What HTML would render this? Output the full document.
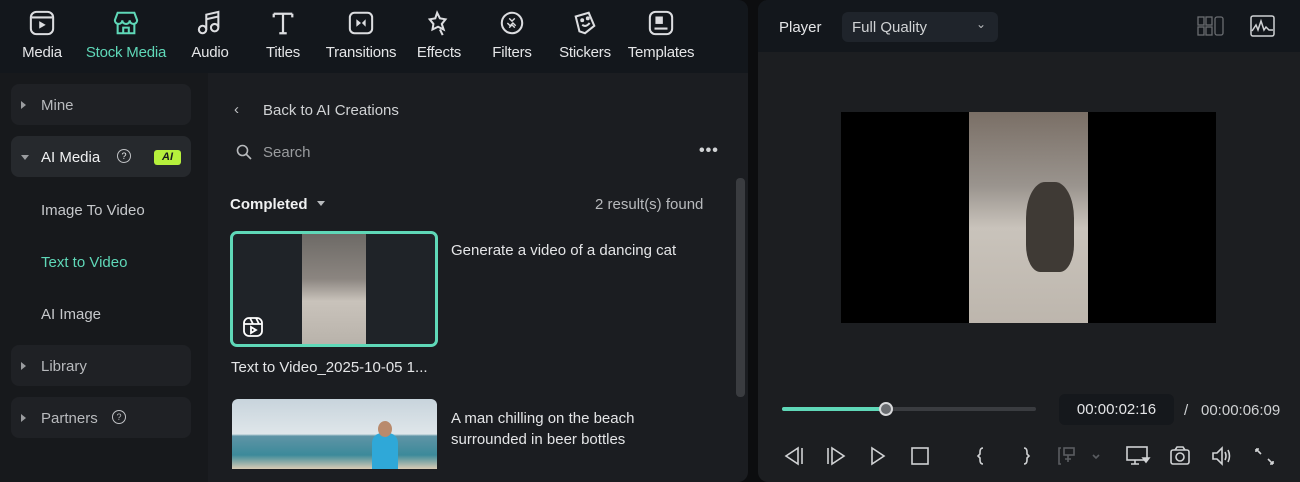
<!DOCTYPE html><html><head><style>
*{margin:0;padding:0;box-sizing:border-box}
body{width:1300px;height:482px;background:#0c0d0f;font-family:"Liberation Sans",sans-serif;color:#d8d9db;position:relative;overflow:hidden;font-size:15px}
.abs{position:absolute}
#left{left:0;top:0;width:748px;height:482px;background:#1b1d21;border-radius:0 10px 10px 0;overflow:hidden}
#tb{left:0;top:0;width:748px;height:73px;background:#13171c}
.tool{position:absolute;top:10px;text-align:center;font-size:15px;color:#e4e5e7;letter-spacing:-0.2px}
.tool svg{display:block;margin:0 auto 8px}
#side{left:0;top:73px;width:208px;height:409px;background:#17191c}
.grp{position:absolute;left:11px;width:180px;height:41px;background:#1f2125;border-radius:8px;font-size:15px;color:#b8babd}
.grp span{position:absolute;top:13px}
.tri{position:absolute;left:10px;top:17px;width:0;height:0;border-left:5px solid #9a9c9f;border-top:4px solid transparent;border-bottom:4px solid transparent}
.sub{position:absolute;left:41px;font-size:15px;color:#c6c8cb}
#right{left:758px;top:0;width:542px;height:482px;background:#1c1e21;border-radius:10px 0 0 10px;overflow:hidden}
#ph{left:0;top:0;width:542px;height:52px;background:#13171c}
</style></head><body>
<div id="left" class="abs">
<div id="tb" class="abs">
 <div class="tool" style="left:19px;width:46px"><svg width="26" height="26" viewBox="0 0 28 28" fill="none" stroke="#dcdde0" stroke-width="2.2"><rect x="2" y="2" width="24" height="24" rx="6"/><path d="M3 8h22"/><path d="M11 12v8l7-4z" fill="#dcdde0" stroke="none"/></svg>Media</div>
 <div class="tool" style="left:82px;width:88px;color:#5fd8b8"><svg width="26" height="26" viewBox="0 0 28 28" fill="none" stroke="#5fd8b8" stroke-width="2.2"><path d="M5 3h18l3 8a4 4 0 0 1-8 0 4 4 0 0 1-8 0 4 4 0 0 1-8 0z"/><path d="M5 14v11h18V14"/><path d="M11 25v-6h6v6"/></svg>Stock Media</div>
 <div class="tool" style="left:189px;width:42px"><svg width="26" height="26" viewBox="0 0 28 28" fill="none" stroke="#dcdde0" stroke-width="2.2"><path d="M10 21V5l13-3v16"/><circle cx="6" cy="21" r="4"/><circle cx="19" cy="19" r="4"/><path d="M10 10l13-3"/></svg>Audio</div>
 <div class="tool" style="left:264px;width:38px"><svg width="26" height="26" viewBox="0 0 28 28" fill="none" stroke="#dcdde0" stroke-width="2.4"><path d="M4 4h20M14 4v21M10 25h8M4 4v4M24 4v4"/></svg>Titles</div>
 <div class="tool" style="left:323px;width:76px"><svg width="26" height="26" viewBox="0 0 28 28" fill="none" stroke="#dcdde0" stroke-width="2.2"><rect x="2" y="3" width="24" height="22" rx="5"/><path d="M9 10l5 4-5 4z M19 10l-4 4 4 4z" fill="#dcdde0" stroke="none"/></svg>Transitions</div>
 <div class="tool" style="left:415px;width:48px"><svg width="26" height="26" viewBox="0 0 28 28" fill="none" stroke="#dcdde0" stroke-width="2.2"><path d="M12 3l3 6 6 1-4 5 2 6-6-3-6 3 1-6-4-5 6-1z"/><path d="M15 21l3 6"/></svg>Effects</div>
 <div class="tool" style="left:490px;width:44px"><svg width="26" height="26" viewBox="0 0 28 28" fill="none" stroke="#dcdde0" stroke-width="2.2"><circle cx="14" cy="14" r="11"/><path d="M11 9l3 3 3-3M9 14l3 3 3-3 3 3M11 19l3-3 3 3" stroke-width="1.5"/></svg>Filters</div>
 <div class="tool" style="left:556px;width:58px"><svg width="26" height="26" viewBox="0 0 28 28" fill="none" stroke="#dcdde0" stroke-width="2.2"><path d="M4 7l14-4 6 14-10 8-6-2z"/><circle cx="11" cy="11" r="1" fill="#dcdde0"/><circle cx="17" cy="9" r="1" fill="#dcdde0"/><path d="M11 16q4 3 8-2"/></svg>Stickers</div>
 <div class="tool" style="left:625px;width:72px"><svg width="26" height="26" viewBox="0 0 28 28" fill="none" stroke="#dcdde0" stroke-width="2.2"><rect x="2" y="2" width="24" height="24" rx="6"/><rect x="8" y="7" width="8" height="8" fill="#dcdde0" stroke="none"/><path d="M7 20h14"/></svg>Templates</div>
</div>
<div id="side" class="abs">
 <div class="grp" style="top:11px"><div class="tri"></div><span style="left:30px">Mine</span></div>
 <div class="grp" style="top:63px;background:#26292d;color:#f0f1f2"><div class="tri" style="border-left:4px solid transparent;border-right:4px solid transparent;border-top:5px solid #9a9c9f;border-bottom:0;top:19px"></div><span style="left:30px">AI Media</span><span style="left:106px;top:13px;width:14px;height:14px;border:1.4px solid #c0c2c5;border-radius:50%;font-size:9px;text-align:center;line-height:12px">?</span><span style="left:143px;top:14px;width:27px;height:15px;background:#b6f03c;color:#1a1c1f;border-radius:3px;font-size:11px;font-weight:bold;font-style:italic;text-align:center;line-height:15px">AI</span></div>
 <div class="sub" style="top:129px">Image To Video</div>
 <div class="sub" style="top:181px;color:#5fd8b8">Text to Video</div>
 <div class="sub" style="top:233px">AI Image</div>
 <div class="grp" style="top:272px"><div class="tri"></div><span style="left:30px">Library</span></div>
 <div class="grp" style="top:324px"><div class="tri"></div><span style="left:30px">Partners</span><span style="left:101px;top:13px;width:14px;height:14px;border:1.4px solid #c0c2c5;border-radius:50%;font-size:9px;text-align:center;line-height:12px">?</span></div>
</div>
<div class="abs" style="left:234px;top:101px;color:#c0c2c5;font-size:15px">‹</div>
<div class="abs" style="left:263px;top:102px;color:#d0d2d4">Back to AI Creations</div>
<svg class="abs" style="left:236px;top:144px" width="16" height="16" fill="none" stroke="#b8babd" stroke-width="1.6"><circle cx="6.5" cy="6.5" r="5"/><path d="M10 10l5 5"/></svg>
<div class="abs" style="left:263px;top:144px;color:#9a9c9f">Search</div>
<div class="abs" style="left:699px;top:142px;color:#d0d2d4;font-size:16px;letter-spacing:1px;font-weight:bold">•••</div>
<div class="abs" style="left:230px;top:196px;color:#f0f1f2;font-weight:bold">Completed</div>
<div class="abs" style="left:317px;top:201px;width:0;height:0;border-left:4px solid transparent;border-right:4px solid transparent;border-top:5px solid #b8babd"></div>
<div class="abs" style="left:595px;top:196px;color:#b8babd">2 result(s) found</div>
<div class="abs" style="left:736px;top:178px;width:9px;height:219px;background:#3a3c40;border-radius:4px"></div>
<div class="abs" style="left:230px;top:231px;width:208px;height:116px;border:3px solid #5fd8b8;border-radius:7px;background:#1f2328;overflow:hidden">
 <div class="abs" style="left:69px;top:0;width:64px;height:112px;background:linear-gradient(#6d6a66,#8b8580 40%,#c9c3bb 60%,#b8b2aa)"></div>
 <svg class="abs" style="left:9px;top:82px" width="22" height="22" fill="none" stroke="#fff" stroke-width="1.8"><rect x="2" y="2" width="18" height="18" rx="5"/><path d="M2 8h18M8 2l3 6M14 2l3 6"/><path d="M9 11v6l5-3z"/></svg>
</div>
<div class="abs" style="left:451px;top:242px;color:#e4e5e7">Generate a video of a dancing cat</div>
<div class="abs" style="left:231px;top:359px;color:#e4e5e7">Text to Video_2025-10-05 1...</div>
<div class="abs" style="left:232px;top:399px;width:205px;height:70px;border-radius:6px 6px 0 0;overflow:hidden;background:linear-gradient(#c8d4dc,#dfe6ea 50%,#5f94a6 53%,#3c8a9a 80%,#d9cbb4)">
 <div class="abs" style="left:140px;top:34px;width:26px;height:36px;background:#2fa8d8;border-radius:10px 10px 0 0"></div>
 <div class="abs" style="left:146px;top:22px;width:14px;height:16px;background:#b98a6c;border-radius:50%"></div>
</div>
<div class="abs" style="left:451px;top:408px;color:#e4e5e7;line-height:21px">A man chilling on the beach<br>surrounded in beer bottles</div>
</div>
<div id="right" class="abs">
<div id="ph" class="abs">
 <div class="abs" style="left:21px;top:19px;color:#e4e5e7">Player</div>
 <div class="abs" style="left:84px;top:12px;width:156px;height:30px;background:#1f242b;border-radius:6px"><span class="abs" style="left:10px;top:7px;color:#d0d2d4">Full Quality</span><span class="abs" style="left:134px;top:5px;color:#b8babd;font-size:12px">⌄</span></div>
 <svg class="abs" style="left:439px;top:16px" width="28" height="20" fill="none" stroke="#6a6d71" stroke-width="1.3"><rect x="1" y="1" width="6" height="8"/><rect x="1" y="11" width="6" height="8"/><rect x="9" y="1" width="6" height="8"/><rect x="9" y="11" width="6" height="8"/><rect x="18" y="1" width="8" height="18" rx="2"/></svg>
 <svg class="abs" style="left:492px;top:15px" width="25" height="22" fill="none" stroke="#d0d2d4" stroke-width="1.5"><rect x="1" y="1" width="23" height="20" rx="2"/><path d="M2 16l4-6 2 5 3-9 3 9 2-3 3 3 4 0"/></svg>
</div>
<div class="abs" style="left:83px;top:112px;width:375px;height:211px;background:#000">
 <div class="abs" style="left:128px;top:0;width:119px;height:211px;background:linear-gradient(#7a6f66,#9a948e 35%,#c9c3bb 55%,#bdb6ad)"></div>
 <div class="abs" style="left:185px;top:70px;width:48px;height:90px;background:#3f3a35;border-radius:40% 40% 30% 30%"></div>
</div>
<div class="abs" style="left:24px;top:407px;width:254px;height:4px;background:#3a3c40;border-radius:2px"></div>
<div class="abs" style="left:24px;top:407px;width:105px;height:4px;background:#5fd8b8;border-radius:2px"></div>
<div class="abs" style="left:121px;top:402px;width:14px;height:14px;background:#6a6d71;border:2px solid #d8d9db;border-radius:50%"></div>
<div class="abs" style="left:301px;top:394px;width:115px;height:31px;background:#15181c;border-radius:6px;color:#e4e5e7;text-align:center;line-height:31px">00:00:02:16</div>
<div class="abs" style="left:426px;top:402px;color:#d0d2d4">/</div>
<div class="abs" style="left:443px;top:402px;color:#d0d2d4">00:00:06:09</div>
<svg class="abs" style="left:26px;top:445px" width="520" height="24" fill="none" stroke="#d0d2d4" stroke-width="1.6">
 <path d="M14 3L2 11l12 8z M18 3v16"/>
 <path d="M44 3v16 M48 3l12 8-12 8z"/>
 <path d="M88 3l12 8-12 8z"/>
 <rect x="128" y="3" width="16" height="16"/>
 <path d="M199 3q-3 0-3 4v2l-2 2 2 2v2q0 4 3 4"/>
 <path d="M240 3q3 0 3 4v2l2 2-2 2v2q0 4-3 4"/>
 <g stroke="#5a5d61"><path d="M277 3h-2v16h2"/><rect x="280" y="3" width="10" height="7"/><path d="M284 10v7M281 14h6"/><path d="M309 10l3 3 3-3"/></g>
 <rect x="343" y="2" width="20" height="13"/><path d="M351 15v4M347 19h8"/><path d="M359 13h6l-3 4z" fill="#d0d2d4"/>
 <rect x="387" y="5" width="18" height="14" rx="2"/><circle cx="396" cy="12" r="4"/><path d="M391 5l2-3h6l2 3"/>
 <path d="M429 8h4l5-5v16l-5-5h-4z"/><path d="M441 7q2 4 0 8M444 5q3 6 0 12"/>
 <path d="M472 4l5 5M472 4h3M472 4v3M489 19l-5-5M489 19h-3M489 19v-3"/>
</svg>
</div>
</body></html>
